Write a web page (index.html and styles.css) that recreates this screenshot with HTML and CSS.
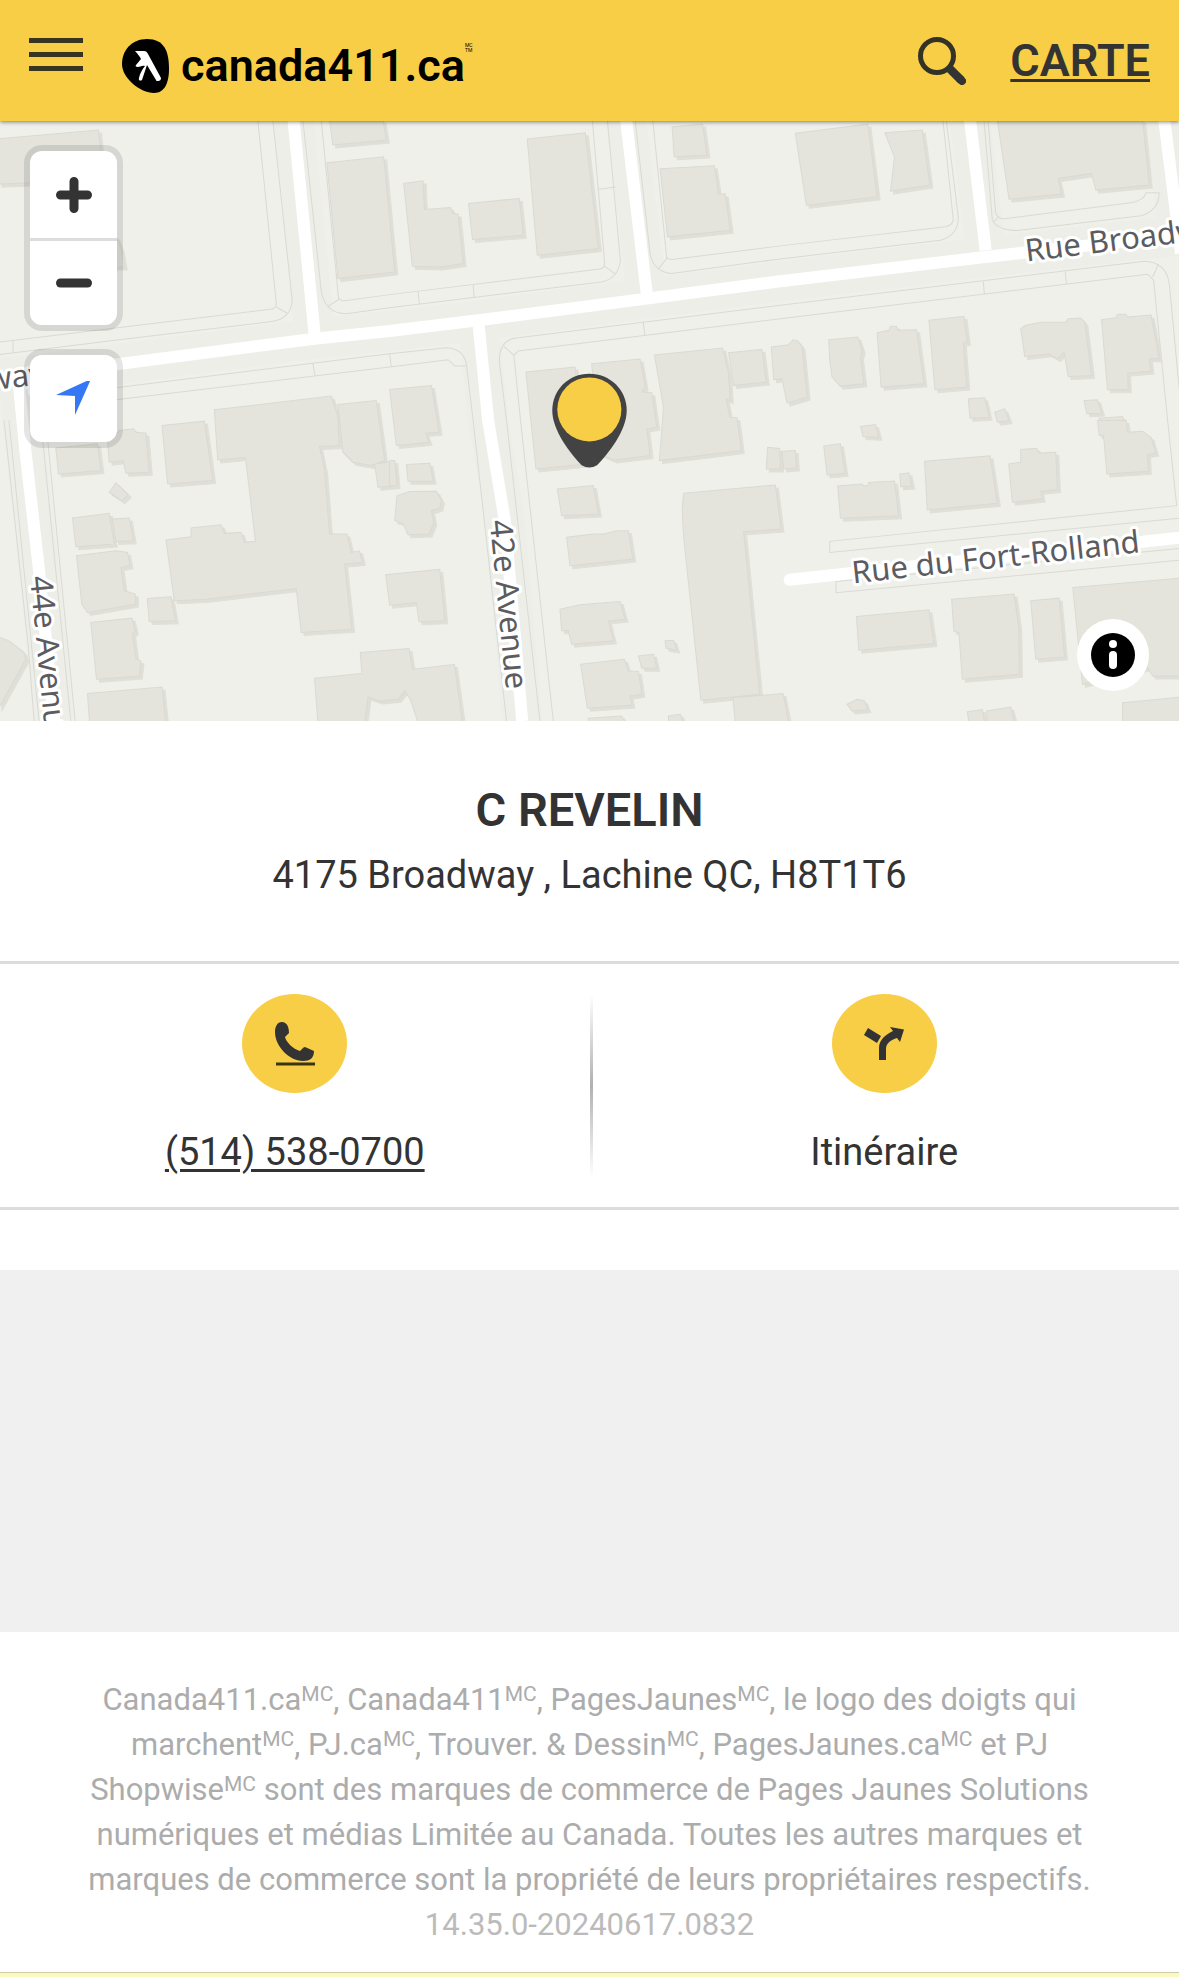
FILE: index.html
```html
<!DOCTYPE html>
<html lang="fr">
<head>
<meta charset="utf-8">
<meta name="viewport" content="width=device-width">
<title>C REVELIN - Canada411.ca</title>
<link rel="stylesheet" href="styles.css">
</head>
<body>
<header class="topbar">
  <button class="menu-button" type="button" aria-label="Menu"><span></span><span></span><span></span></button>
  <a class="logo" href="#">
    <svg class="logo-mark" viewBox="0 0 47 54" aria-hidden="true">
      <path d="M25 0C10 0 0 11 0 25c0 14 18 29 32 29 11 0 15-11 15-24C47 12 42 0 25 0z" fill="#000"/>
      <path d="M13 12h9c2 0 3 1 4 3l13 24c0 2-1 3-3 3-1 0-2 0-2-1L25 26l-5 15c-1 1-4 1-3-2 1-5 3-8 6-12-3-1-5 1-7 1-2 0-3-1-2-2l5-6c-1-2-3-5-6-8z" fill="#fff"/>
    </svg>
    <span class="logo-text">canada411.ca</span>
    <span class="logo-tm">MC<br>TM</span>
  </a>
  <button class="search-button" type="button" aria-label="Rechercher">
    <svg viewBox="0 0 48 48" aria-hidden="true">
      <circle cx="19" cy="19" r="16.500" fill="none" stroke="#333226" stroke-width="5"/>
      <path d="M31 31L43.500 43.500" stroke="#333" stroke-width="8.500"/>
      <path d="M42 42L44 44" stroke="#333" stroke-width="8" stroke-linejoin="round" stroke-linecap="round"/>
    </svg>
  </button>
  <a class="map-link" href="#">CARTE</a>
</header>

<section class="map" aria-label="Carte">
  <svg class="map-canvas" viewBox="0 3 3537 1797" preserveAspectRatio="xMidYMid slice">
    <g class="road-verge">
      <path d="M0 775L350 732 945 655 1170 632 1435 600 1940 535 2340 483 2940 412 3537 345" stroke-width="130"/>
      <path d="M882 0L945 640M1878 0L1940 520M1435 600L1465 900 1515 1200 1567 1800M2908 0L2955 390M3490 0L3540 400M60 800L120 1350 165 1800"/>
    </g>
    <g class="lots">
      <path d="M775 0L830 545Q832 562 818 566L0 665M820 0L878 540Q875 600 805 605L360 658 0 703M830 560L862 578M42 662V696"/>
      <path d="M910 0L965 510Q975 580 1040 580L1170 562 1805 485Q1855 475 1861 420L1822 0M965 0L1017 535 1030 542 1170 523 1800 446Q1814 444 1814 430L1777 0M985 558L1020 536M1255 512L1259 550M1420 492L1423 530M1792 208L1846 201M1812 437L1845 461"/>
      <path d="M350 802L1170 700 1340 682Q1400 684 1402 750L1420 900 1520 1800M350 838L1170 740 1345 718 1365 737H1400M940 728L946 765M1170 700L1175 740"/>
      <path d="M1905 0L1950 400Q1960 455 2015 460L2340 416 2820 360Q2875 345 2873 290L2837 0M1958 0L2000 415 2015 418 2340 377 2835 320Q2855 315 2858 300L2827 0M1975 446L2002 412"/>
      <path d="M1620 1800L1520 900 1498 720Q1500 655 1555 652L2340 555 3430 423Q3495 425 3505 490L3537 830M1660 1800L1562 900 1542 705 1555 692 2340 595 3440 462 3458 480 3500 900 3527 1155 2488 1262V1295L3540 1192M1512 678L1542 704M1930 607L1934 645M2948 484L2951 520M3193 453L3197 490M3455 470L3472 433"/>
      <path d="M2950 0L2975 300Q2990 330 3050 331L3420 287Q3475 270 3475 217M2962 0L2985 280Q2995 297 3010 296L3390 248Q3430 240 3435 218H3475M2978 306L2992 292"/>
      <path d="M3540 1283L2507 1382V1416L3540 1318M15 900L88 1580 105 1800M30 900L120 1800M125 900L215 1800M140 900L228 1800"/>
    </g>
    <g class="buildings">
      <path d="M0 56L298 30 312 180 0 192zM300 345L352 350 366 388 375 440 300 440zM990 0L1150 0 1160 60 1000 75zM982 128L1152 110 1185 455 1015 475z"/>
      <path transform="translate(1170)" d="M42 190L100 182 104 268 182 262 190 280 205 282 220 430 150 440 68 438zM236 250L388 235 400 345 248 358zM412 57L586 38 625 385 442 405zM846 20L937 12 950 105 852 110zM810 146L972 137 985 222 1005 222 1020 330 832 350zM408 755L555 740 590 1030 438 1045zM605 730L750 716 765 800 755 815 785 817 800 920 770 925 780 1005 672 1018 630 1000zM793 704L997 683 1015 760 1020 840 1008 835 1018 890 1040 892 1053 990 808 1020 820 860zM1015 697L1115 687 1128 785 1030 795zM1143 680L1195 673 1208 658 1222 662 1235 680 1250 830 1190 848 1175 775 1150 778zM0 807L125 795 148 935 108 938 118 965 20 975z"/>
      <path transform="translate(2340)" d="M45 40L262 12 290 230 78 255zM313 38L425 30 448 195 330 213 342 110zM650 0L1085 0 1105 195 945 210 932 160 832 175 842 222 685 237zM145 658L232 650 245 690 240 710 250 790 180 797 155 770 148 720zM290 637L325 630 330 618 348 618 352 630 408 628 430 790 302 800zM445 600L550 588 560 665 548 668 558 800 463 808zM720 625L735 615 780 606 855 606 862 595 900 593 912 607 932 765 862 768 850 695 830 715 805 700 732 708zM962 598L1005 592 1010 582 1035 582 1040 590 1110 584 1135 715 1105 715 1110 752 1040 758 1042 808 980 808zM563 835L612 832 625 890 568 893zM642 875L672 865 685 900 650 905zM910 840L950 838 962 878 918 880zM955 893L1025 888 1030 905 960 908z"/>
      <path transform="translate(0 900)" d="M170 82L295 70 305 150 178 160zM325 60L362 30 403 25 410 35 440 38 450 155 380 158 372 120 330 125zM488 15L615 2 640 180 505 190zM350 187L387 222 368 240 330 215zM220 292L330 278 345 370 230 378zM340 295L390 292 402 360 350 362zM232 405L350 390 385 395 392 435 365 440 375 510 408 520 408 550 265 575 248 550zM444 533L515 528 528 600 450 602zM275 605L398 592 408 630 400 640 410 715 425 720 420 765 292 775zM265 818L488 798 505 960 275 960zM-10 645L30 660 75 695 80 715 0 860zM645 -32L995 -73 1015 -10 1018 75 960 78 975 150 990 340 1042 340 1055 395 1080 390 1088 425 1035 430 1056 625 905 635 890 503 620 535 525 540 500 358 575 348 575 322 665 312 675 338 725 335 735 365 768 362 738 110 655 118zM1015 -48L1130 -60 1155 120 1115 135 1060 125 1030 95zM1125 130L1180 122 1190 195 1135 200zM945 772L1087 758 1082 695 1228 683 1238 745 1364 731 1388 905 1255 905 1232 835 1215 810 1195 835 1140 840 1105 828 1095 905 955 905zM1158 462L1320 446 1335 600 1258 603 1250 545 1170 553z"/>
      <path transform="translate(1170 900)" d="M50 132L120 128 130 182 55 182zM0 120L15 120 22 195 0 195zM22 225L60 213 140 212 155 240 150 262 125 270 132 305 118 340 55 342 40 308 15 300zM502 205L610 195 625 280 515 285zM530 350L610 340 640 340 680 330 715 330 728 415 540 435zM510 565L570 552 690 542 705 595 655 600 670 660 545 670 535 630 515 630zM572 730L703 715 715 750 745 752 755 820 720 825 725 852 592 862zM745 705L790 700 800 742 755 742zM825 660L850 658 860 688 828 682zM880 218L1155 193 1172 325 1060 333 1108 820 932 838 880 345 876 270zM1028 830L1178 818 1195 905 1035 905zM1132 80L1168 84 1170 145 1128 145zM1175 92L1215 90 1218 142 1180 145zM595 892L695 885 705 905 595 905zM835 885L870 880 880 905 835 905z"/>
      <path transform="translate(2340 900)" d="M240 18L285 12 295 50 248 48zM130 76L180 70 194 158 140 163zM172 196L245 190 250 196 262 195 265 186 342 181 354 285 180 293zM358 160L385 157 394 196 360 198zM432 122L628 106 650 248 440 268zM684 130L720 125 720 87 768 83 775 97 825 95 830 207 780 212 784 235 695 245zM950 0L1035 0 1040 35 1085 32 1110 50 1124 98 1100 102 1102 152 978 160 968 45 955 45zM228 587L445 567 460 668 235 688zM513 535L700 520 714 620 716 760 545 775 535 635 520 632zM750 540L835 532 851 708 765 715zM876 500L1200 472 1200 765 1115 765 1100 740 905 790zM1025 845L1200 828 1200 905 1025 905zM200 850L230 835 252 840 262 866 215 870zM560 872L605 866 612 905 565 905zM618 870L690 858 702 905 620 905z"/>
    </g>
    <g class="roads">
      <path d="M0 775L350 732 945 655 1170 632 1435 600 1940 535 2340 483 2940 412 3537 345"/>
      <path d="M882 0L945 640M1878 0L1940 520M1435 600L1465 900 1515 1200 1567 1800M2908 0L2955 390M3490 0L3540 400M60 800L80 1000 120 1350 165 1800"/>
      <path d="M2368 1377L3545 1250" stroke-linecap="round"/>
    </g>
    <g class="street-names">
      <text transform="translate(3077 424) rotate(-7)">Rue Broadway</text>
      <text transform="translate(140 790) rotate(-7)" text-anchor="end">Rue Broadway</text>
      <text transform="translate(2558 1388) rotate(-6.200)">Rue du Fort-Rolland</text>
      <text transform="translate(1470 1200) rotate(84.500)">42e Avenue</text>
      <text transform="translate(93 1368) rotate(84.500)">44e Avenue</text>
    </g>
    <g>
      <path d="M1768 760C1706 760 1657 808 1657 870C1657 930 1712 1000 1745 1034Q1768 1048 1791 1034C1824 1000 1880 930 1880 870C1880 808 1830 760 1768 760z" fill="#434343"/>
      <circle cx="1768" cy="867" r="96" fill="#f7ce46"/>
    </g>
  </svg>
  <div class="map-controls">
    <div class="control-group">
      <button type="button" aria-label="Zoom avant"><svg viewBox="0 0 36 36"><path d="M18 4.500V31.500M4.500 18H31.500" stroke="#333" stroke-width="9" stroke-linecap="round"/></svg></button>
      <button type="button" aria-label="Zoom arrière"><svg viewBox="0 0 36 36"><path d="M4.500 18H31.500" stroke="#333" stroke-width="9" stroke-linecap="round"/></svg></button>
    </div>
    <div class="control-group">
      <button type="button" aria-label="Ma position"><svg viewBox="0 2 36 36"><path d="M35 0L0 16 19 17 19 36z" fill="#3478f6"/></svg></button>
    </div>
  </div>
  <button class="map-info" type="button" aria-label="Informations">
    <svg viewBox="0 0 44 44"><circle cx="22" cy="22" r="22"/><circle cx="22" cy="11" r="4" fill="#fff"/><path d="M22 22V32" stroke="#fff" stroke-width="8" stroke-linecap="round"/></svg>
  </button>
</section>

<main>
  <section class="listing">
    <h1>C REVELIN</h1>
    <p>4175 Broadway , Lachine QC, H8T1T6</p>
  </section>
  <nav class="actions">
    <a class="action action-call" href="tel:5145380700">
      <span class="action-icon">
        <svg viewBox="0 0 40 44" aria-hidden="true">
          <path d="M7 0C2 0 0 5 0 10c0 14 14 29 28 29 7 0 11-3 11-10L30 25q-1 0-2 1l-3 3C18 27 11 20 10 15l4-4C14 5 12 0 7 0z" fill="#333"/>
          <path d="M1 40.500H40V43.500H1z" fill="#3a3510"/>
        </svg>
      </span>
      <span class="action-label">(514) 538-0700</span>
    </a>
    <a class="action" href="#">
      <span class="action-icon">
        <svg viewBox="0 0 40 44" aria-hidden="true">
          <path d="M4 6L17 14 13 21 0 13z" fill="#333"/>
          <path d="M26 5L40 7.500 36 20 33 16C27 18 22 21 22 27V38H15V26C15 18 21 13 29 9z" fill="#333"/>
        </svg>
      </span>
      <span class="action-label">Itinéraire</span>
    </a>
  </nav>
  <div class="ad-slot"></div>
</main>

<footer class="legal">
  <p>Canada411.ca<sup>MC</sup>, Canada411<sup>MC</sup>, PagesJaunes<sup>MC</sup>, le logo des doigts qui<br>
  marchent<sup>MC</sup>, PJ.ca<sup>MC</sup>, Trouver. &amp; Dessin<sup>MC</sup>, PagesJaunes.ca<sup>MC</sup> et PJ<br>
  Shopwise<sup>MC</sup> sont des marques de commerce de Pages Jaunes Solutions<br>
  numériques et médias Limitée au Canada. Toutes les autres marques et<br>
  marques de commerce sont la propriété de leurs propriétaires respectifs.</p>
  <p class="version">14.35.0-20240617.0832</p>
</footer>
</body>
</html>
```
FILE: styles.css
```css
* { box-sizing: border-box; }

body {
  margin: 0;
  background: #fff;
  color: #333;
  font-family: Roboto, "Liberation Sans", sans-serif;
}

button {
  margin: 0;
  padding: 0;
  border: 0;
  background: none;
  cursor: pointer;
}

a { color: inherit; text-decoration: none; }
svg { display: block; }
h1, p { margin: 0; }

/* Top bar */
.topbar {
  position: relative;
  z-index: 1;
  display: flex;
  align-items: center;
  height: 121px;
  padding: 0 29px;
  background: #f7ce46;
  box-shadow: 0 1px 4px rgba(0, 0, 0, .5);
}

.menu-button {
  display: flex;
  flex-direction: column;
  gap: 9px;
  width: 54px;
  margin-bottom: 12px;
}

.menu-button span { height: 5px; background: #383420; }

.logo {
  display: flex;
  align-items: center;
  gap: 12px;
  margin: 11px auto 0 39px;
  color: #000;
}

.logo-mark { width: 47px; height: 54px; }
.logo-text { font-size: 45px; line-height: 54px; font-weight: 600; }

.logo-tm {
  align-self: flex-start;
  margin: 4px 0 0 -12px;
  font-size: 5px;
  line-height: 5px;
}

.search-button svg { width: 48px; height: 48px; }

.map-link {
  margin-left: 44px;
  font-size: 45px;
  line-height: 54px;
  font-weight: 600;
  text-decoration: underline;
  text-decoration-thickness: 3px;
  text-underline-offset: 3px;
}

/* Map */
.map {
  position: relative;
  height: 600px;
  overflow: hidden;
  background: #eff0ea;
}

.map-canvas { width: 100%; height: 100%; }
.road-verge path { fill: none; stroke: #edeee8; stroke-width: 120px; }
.lots path { fill: none; stroke: #dadad4; stroke-width: 3px; }
.buildings path {
  fill: #e4e4dd;
  stroke: #dadad3;
  stroke-width: 3px;
  filter: drop-shadow(9px 9px 0 #dfdfd8);
}
.roads path { fill: none; stroke: #fff; stroke-width: 36px; }
.street-names text {
  fill: #5c5c60;
  stroke: #fff;
  stroke-width: 18px;
  stroke-linejoin: round;
  paint-order: stroke;
  font-family: "Noto Sans", sans-serif;
  font-size: 93px;
}

.map-controls {
  position: absolute;
  top: 24px;
  left: 24px;
  display: grid;
  gap: 18px;
}

.control-group {
  display: grid;
  border: 6px solid rgba(0, 0, 0, .1);
  border-radius: 18px;
  background: #fff;
  background-clip: padding-box;
}

.control-group button {
  display: grid;
  place-items: center;
  width: 87px;
  height: 87px;
}

.control-group button + button { border-top: 3px solid #ddd; }
.control-group svg { width: 36px; height: 36px; }

.map-info {
  position: absolute;
  right: 30px;
  bottom: 30px;
  display: grid;
  place-items: center;
  width: 72px;
  height: 72px;
  border-radius: 50%;
  background: #fff;
}

.map-info svg { width: 44px; height: 44px; }

/* Listing */
.listing {
  padding: 58px 24px 52px;
  text-align: center;
}

.listing h1 { font-size: 47px; line-height: 62px; font-weight: 600; }
.listing p { font-size: 38px; line-height: 68px; }

.actions {
  position: relative;
  display: grid;
  grid-template-columns: 1fr 1fr;
  border: solid #dcdcdc;
  border-width: 3px 0;
}

.actions::after {
  content: "";
  position: absolute;
  top: 30px;
  bottom: 30px;
  left: 50%;
  width: 3px;
  background: linear-gradient(#fff, #b0b0b0, #fff);
}

.action {
  display: flex;
  flex-direction: column;
  align-items: center;
  gap: 32px;
  padding: 30px 0 28px;
}

.action-icon {
  display: grid;
  place-items: center;
  width: 105px;
  height: 99px;
  border-radius: 50%;
  background: #f7ce46;
}

.action-icon svg { width: 40px; height: 44px; }
.action-label { font-size: 38px; line-height: 54px; }

.action-call .action-label {
  text-decoration: underline;
  text-decoration-thickness: 3px;
  text-underline-offset: 4px;
}

.ad-slot { height: 362px; margin-top: 60px; background: #f0f0f0; }

/* Legal notice */
.legal {
  padding: 45px 24px 26px;
  border-bottom: 4px solid #fbf8c0;
  box-shadow: inset 0 -1px 0 #cfccaa;
  color: #acacac;
  font-size: 31px;
  line-height: 45px;
  text-align: center;
}

.legal sup {
  font-size: 21px;
  line-height: 0;
  vertical-align: 9px;
}

.version { color: #bbb; }
```
